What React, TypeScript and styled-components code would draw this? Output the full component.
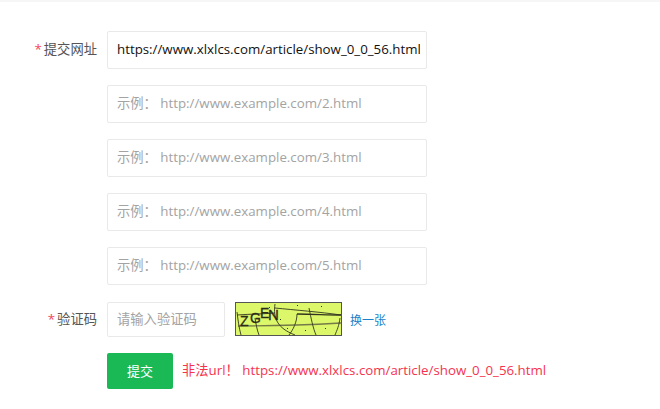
import styled, { createGlobalStyle } from 'styled-components';

const GlobalStyle = createGlobalStyle`
  html, body {
    margin: 0;
    padding: 0;
    background: #fff;
  }
  body {
    font-family: "Open Sans", "Noto Sans CJK SC", sans-serif;
    font-size: 13.3px;
    color: #555;
  }
  input::placeholder {
    color: #a3a3a3;
    opacity: 1;
  }
`;

const Page = styled.div`
  width: 660px;
  height: 409px;
  box-sizing: border-box;
  border-top: 2px solid #f6f6f6;
  padding-top: 29px;
  overflow: hidden;
`;

const Form = styled.form`
  display: flex;
  flex-direction: column;
  gap: 16px;
`;

const Row = styled.div`
  display: flex;
  align-items: center;
`;

const CaptchaRow = styled(Row)`
  margin-top: 1px;
`;

const Label = styled.label`
  width: 97px;
  text-align: right;
  margin-right: 10px;
  padding-bottom: 3px;
  font-size: 13.3px;
  white-space: nowrap;
`;

const Star = styled.span`
  color: #f5455c;
  margin-right: 2px;
`;

const Input = styled.input<{ $small?: boolean }>`
  box-sizing: border-box;
  width: ${(p) => (p.$small ? '118px' : '320px')};
  height: ${(p) => (p.$small ? '35px' : '38px')};
  border: 1px solid #e9e9e9;
  border-radius: 2px;
  padding: 0 6px ${(p) => (p.$small ? '2px' : '3px')} 9px;
  outline: none;
  background: #fff;
  color: #111;
  font-family: "Open Sans", "Noto Sans CJK SC", sans-serif;
  font-size: 13.3px;
`;

const Captcha = styled.svg`
  display: block;
  width: 107px;
  height: 34px;
  margin-left: 10px;
  margin-bottom: 1px;
`;

const SwapLink = styled.a`
  margin-left: 8px;
  color: #1a82c8;
  font-size: 12px;
  text-decoration: none;
`;

const SubmitRow = styled(Row)`
  margin-left: 107px;
`;

const SubmitButton = styled.button`
  width: 66px;
  height: 36px;
  border: none;
  border-radius: 2px;
  background: #1bb956;
  color: #fff;
  font-family: "Open Sans", "Noto Sans CJK SC", sans-serif;
  font-size: 13px;
  padding: 0 0 2px;
`;

const ErrorText = styled.span`
  margin-left: 9px;
  padding-bottom: 3px;
  color: #f5334f;
  font-size: 13.3px;
  white-space: pre;
`;

const examples = [2, 3, 4, 5];

export default function App() {
  return (
    <Page>
      <GlobalStyle />
      <Form onSubmit={(e) => e.preventDefault()}>
        <Row>
          <Label><Star>*</Star>提交网址</Label>
          <Input defaultValue="https://www.xlxlcs.com/article/show_0_0_56.html" />
        </Row>
        {examples.map((n) => (
          <Row key={n}>
            <Label />
            <Input placeholder={`示例： http://www.example.com/${n}.html`} />
          </Row>
        ))}
        <CaptchaRow>
          <Label><Star>*</Star>验证码</Label>
          <Input $small placeholder="请输入验证码" />
          <Captcha viewBox="0 0 107 34">
            <rect x="0.5" y="0.5" width="106" height="33" fill="#dcf76a" stroke="#555" />
            <g fill="none" stroke="#33361f" strokeWidth="0.9">
              <path d="M2 13 C16 12 28 12 40 11" />
              <path d="M40 6 C60 8 85 10 106 13" />
              <path d="M62 12 C78 12 92 13 106 13" strokeWidth="1.3" />
              <path d="M3 24 C40 24 70 23 106 21" stroke="#757a48" strokeWidth="1.3" />
              <path d="M2 10 C3 18 4 26 6 33" />
              <path d="M20 16 C21 22 22 28 24 33" />
              <path d="M40 2 C38 16 42 26 60 33" />
              <path d="M62 12 C62 20 58 28 54 33" />
              <path d="M74 6 C76 16 78 26 81 33" />
              <path d="M105 16 C104 24 102 28 100 33" />
            </g>
            <g fill="#2a2c18" stroke="#2a2c18" strokeWidth="0.3" fontFamily="Liberation Sans, sans-serif" fontSize="14">
              <text x="5" y="24">Z</text>
              <text x="15" y="21">G</text>
              <text x="25" y="16">E</text>
              <text x="33" y="18" fontSize="15">N</text>
            </g>
            <g fill="#33361f">
              <rect x="34" y="5" width="1" height="1" />
              <rect x="62" y="3" width="1" height="1" />
              <rect x="70" y="28" width="1" height="1" />
              <rect x="52" y="26" width="1" height="1" />
              <rect x="45" y="17" width="1" height="1" />
              <rect x="90" y="26" width="1" height="1" />
              <rect x="86" y="4" width="1" height="1" />
            </g>
          </Captcha>
          <SwapLink href="#">换一张</SwapLink>
        </CaptchaRow>
        <SubmitRow>
          <SubmitButton type="submit">提交</SubmitButton>
          <ErrorText>非法url！ https://www.xlxlcs.com/article/show_0_0_56.html</ErrorText>
        </SubmitRow>
      </Form>
    </Page>
  );
}
